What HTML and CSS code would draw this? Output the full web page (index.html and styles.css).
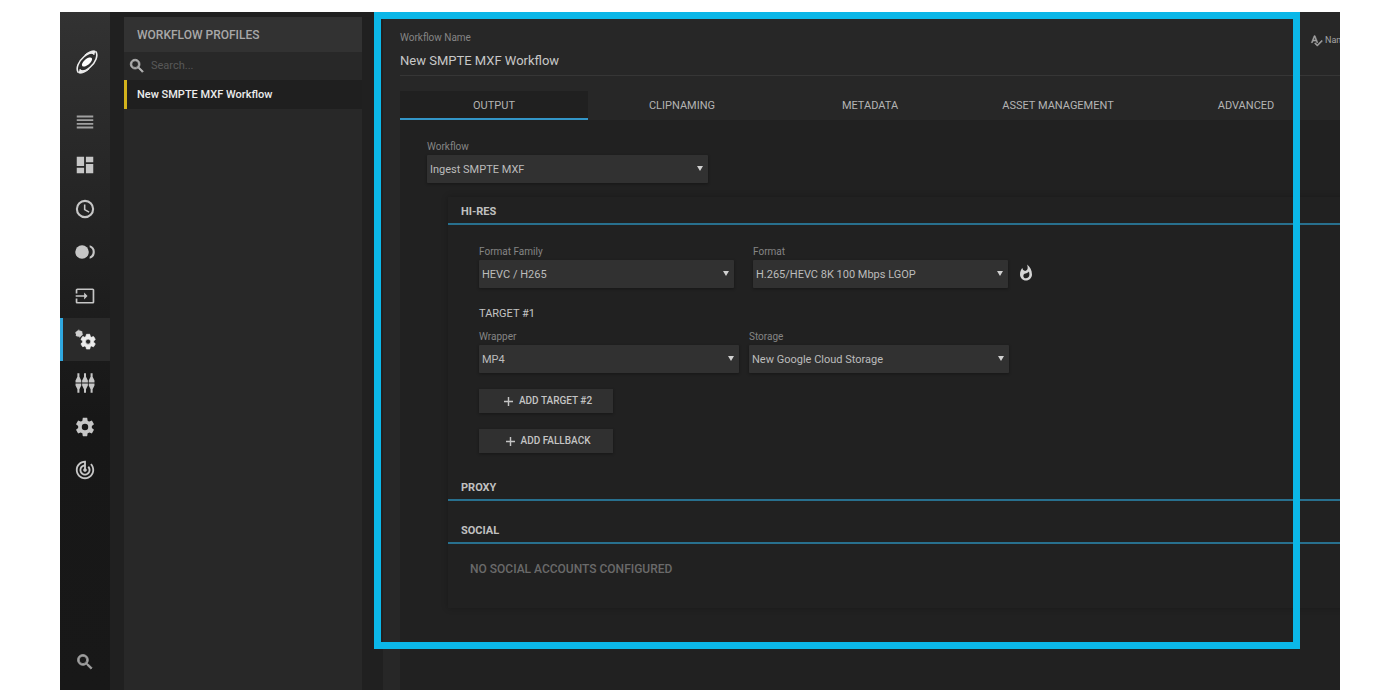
FILE: index.html
```html
<!DOCTYPE html>
<html lang="en">
<head>
<meta charset="utf-8">
<title>Workflow Profiles</title>
<link rel="stylesheet" href="styles.css">
</head>
<body>
<div class="app">
  <nav class="rail" aria-label="Main">
    <a class="logo" href="#" aria-label="Home">
      <svg viewBox="0 0 24 24"><g transform="rotate(-40 12 12)" fill="none" stroke="#ededed"><path d="M-1.500 14.500C-1 9.500 6 6 13 6c6 0 9.500 2 9.500 5" stroke-width="1.600"/><path d="M25.500 9.500C25 14.500 18 18 11 18c-6 0-9.500-2-9.500-5" stroke-width="1.600"/><path d="M-1.500 14.500c.5 2.500 5.500 4.500 11 4.200-3-.4-8-1.600-8-5.200M25.500 9.500c-.5-2.500-5.500-4.500-11-4.200 3 .4 8 1.600 8 5.200" fill="#ededed" stroke-width=".8"/><ellipse cx="12" cy="12" rx="6.200" ry="2.900" fill="#fff" stroke="none"/></g></svg>
    </a>
    <div class="rail-items">
      <button class="rail-item dim" aria-label="Menu"><svg viewBox="0 0 24 24"><path d="M3 15h18v-2H3v2zm0 4h18v-2H3v2zm0-8h18V9H3v2zm0-6v2h18V5H3z"/></svg></button>
      <button class="rail-item" aria-label="Dashboard"><svg viewBox="0 0 24 24"><path d="M3 13h8V3H3v10zm0 8h8v-6H3v6zm10 0h8V11h-8v10zm0-18v6h8V3h-8z"/></svg></button>
      <button class="rail-item" aria-label="Schedule"><svg viewBox="0 0 24 24"><path d="M12 2a10 10 0 1 0 0 20 10 10 0 0 0 0-20zm0 17.700a7.700 7.700 0 1 1 0-15.400 7.700 7.700 0 0 1 0 15.400zm.5-12.700H10.800v6l5.200 3.200.9-1.400-4.400-2.600z"/></svg></button>
      <button class="rail-item" aria-label="Record"><svg viewBox="-1 -1 26 26"><circle cx="8.500" cy="12" r="8"/><path d="M17.500 4v2.500a6 6 0 0 1 0 11V20a8.300 8.300 0 0 0 0-16z"/></svg></button>
      <button class="rail-item" aria-label="Inputs"><svg viewBox="-1 -1 26 26"><path d="M21 3H3c-1.100 0-2 .9-2 2v4h2V5h18v14H3v-4H1v4c0 1.100.9 2 2 2h18c1.100 0 2-.9 2-2V5c0-1.100-.9-2-2-2zM11 16l4-4-4-4v3H1v2h10v3z"/></svg></button>
      <button class="rail-item active" aria-label="Workflow profiles"><svg viewBox="0 0 24 24"><circle cx="5.500" cy="5" r="3.500" opacity=".85"/><circle cx="5.500" cy="5" r="3.700" fill="none" stroke="#ddd" stroke-width="1" stroke-dasharray="1.900 1.970"/><g transform="translate(5.800 4.200) scale(.8)"><path class="bold" d="M19.430 12.980c.04-.32.07-.64.07-.98s-.03-.66-.07-.98l2.110-1.650c.19-.15.24-.42.12-.64l-2-3.460c-.12-.22-.39-.3-.61-.22l-2.490 1c-.52-.4-1.080-.73-1.690-.98l-.38-2.650C14.460 2.180 14.250 2 14 2h-4c-.25 0-.46.18-.49.42l-.38 2.650c-.61.25-1.170.59-1.690.98l-2.490-1c-.23-.09-.49 0-.61.22l-2 3.460c-.13.22-.07.49.12.64l2.110 1.650c-.04.32-.07.65-.07.98s.03.66.07.98l-2.110 1.650c-.19.15-.24.42-.12.64l2 3.460c.12.22.39.3.61.22l2.490-1c.52.4 1.080.73 1.690.98l.38 2.650c.03.24.24.42.49.42h4c.25 0 .46-.18.49-.42l.38-2.650c.61-.25 1.170-.59 1.690-.98l2.490 1c.23.09.49 0 .61-.22l2-3.460c.12-.22.07-.49-.12-.64l-2.110-1.650zM12 15.500a3.500 3.500 0 1 1 0-7 3.500 3.500 0 0 1 0 7z"/></g></svg></button>
      <button class="rail-item" aria-label="Mixer"><svg viewBox="-1 -1 26 26"><path d="M3 .5h2.400v4L7.600 9v2.300H.8V9L3 4.500zM10.800.5h2.400v4L15.400 9v2.300H8.600V9l2.200-4.500zM18.600.5H21v4L23.200 9v2.300h-6.800V9l2.200-4.500zM.8 12.700h6.800V15l-2.200 4.500v4H3v-4L.8 15zM8.600 12.700h6.800V15l-2.200 4.500v4h-2.400v-4L8.600 15zM16.400 12.700h6.800V15L21 19.500v4h-2.400v-4L16.400 15z"/></svg></button>
      <button class="rail-item" aria-label="Settings"><svg viewBox="0 0 24 24"><path d="M19.430 12.980c.04-.32.07-.64.07-.98s-.03-.66-.07-.98l2.110-1.650c.19-.15.24-.42.12-.64l-2-3.460c-.12-.22-.39-.3-.61-.22l-2.490 1c-.52-.4-1.080-.73-1.690-.98l-.38-2.650C14.460 2.180 14.250 2 14 2h-4c-.25 0-.46.18-.49.42l-.38 2.650c-.61.25-1.170.59-1.690.98l-2.490-1c-.23-.09-.49 0-.61.22l-2 3.460c-.13.22-.07.49.12.64l2.110 1.650c-.04.32-.07.65-.07.98s.03.66.07.98l-2.110 1.650c-.19.15-.24.42-.12.64l2 3.460c.12.22.39.3.61.22l2.490-1c.52.4 1.080.73 1.690.98l.38 2.650c.03.24.24.42.49.42h4c.25 0 .46-.18.49-.42l.38-2.650c.61-.25 1.170-.59 1.690-.98l2.490 1c.23.09.49 0 .61-.22l2-3.460c.12-.22.07-.49-.12-.64l-2.110-1.650zM12 15.500a3.500 3.500 0 1 1 0-7 3.500 3.500 0 0 1 0 7z"/></svg></button>
      <button class="rail-item" aria-label="Monitoring"><svg viewBox="0 0 24 24"><path d="M19.070 4.930l-1.410 1.410C19.100 7.790 20 9.790 20 12c0 4.420-3.580 8-8 8s-8-3.580-8-8c0-4.080 3.050-7.440 7-7.930v2.020C8.160 6.570 6 9.030 6 12c0 3.310 2.690 6 6 6s6-2.690 6-6c0-1.660-.67-3.160-1.760-4.240l-1.410 1.410C15.550 9.900 16 10.900 16 12c0 2.210-1.790 4-4 4s-4-1.790-4-4c0-1.860 1.280-3.410 3-3.860v2.140c-.6.35-1 .98-1 1.720 0 1.100.9 2 2 2s2-.9 2-2c0-.74-.4-1.380-1-1.720V2h-1C6.480 2 2 6.480 2 12s4.480 10 10 10 10-4.480 10-10c0-2.760-1.120-5.260-2.930-7.070z"/></svg></button>
    </div>
    <button class="rail-item rail-search dim" aria-label="Search"><svg class="bold" viewBox="0 0 24 24"><path d="M15.500 14h-.79l-.28-.27A6.470 6.470 0 0 0 16 9.500 6.500 6.500 0 1 0 9.500 16c1.610 0 3.090-.59 4.230-1.570l.27.28v.79l5 4.990L20.490 19l-4.990-5zm-6 0a4.500 4.500 0 1 1 0-9 4.500 4.500 0 0 1 0 9z"/></svg></button>
  </nav>

  <aside class="profiles">
    <h1 class="profiles-title">WORKFLOW PROFILES</h1>
    <label class="search">
      <svg class="bold" viewBox="0 0 24 24" aria-hidden="true"><path d="M15.500 14h-.79l-.28-.27A6.470 6.470 0 0 0 16 9.500 6.500 6.500 0 1 0 9.500 16c1.610 0 3.090-.59 4.230-1.570l.27.28v.79l5 4.990L20.490 19l-4.990-5zm-6 0a4.500 4.500 0 1 1 0-9 4.500 4.500 0 0 1 0 9z"/></svg>
      <input type="search" placeholder="Search..." aria-label="Search profiles">
    </label>
    <a class="profile" href="#">New SMPTE MXF Workflow</a>
  </aside>

  <main class="editor">
    <header class="editor-head">
      <div class="name-row">
        <div class="name-field">
          <label class="label" for="wf-name">Workflow Name</label>
          <input class="name-input" id="wf-name" type="text" value="New SMPTE MXF Workflow">
        </div>
        <button class="naming"><svg class="bold" viewBox="0 0 24 24" aria-hidden="true"><path d="M12.450 16h2.090L9.430 3H7.570L2.460 16h2.090l1.120-3h5.640l1.140 3zm-6.020-5L8.500 5.480 10.570 11H6.430zm15.160.59l-8.090 8.090L9.830 16l-1.410 1.410 5.090 5.090L23 13l-1.410-1.410z"/></svg>Name</button>
      </div>
      <div class="tabs" role="tablist">
        <button class="tab selected" role="tab" aria-selected="true">OUTPUT</button>
        <button class="tab" role="tab">CLIPNAMING</button>
        <button class="tab" role="tab">METADATA</button>
        <button class="tab" role="tab">ASSET MANAGEMENT</button>
        <button class="tab" role="tab">ADVANCED</button>
      </div>
    </header>

    <div class="editor-body">
      <div class="field workflow-field">
        <label class="label" for="workflow">Workflow</label>
        <div class="select"><select id="workflow"><option>Ingest SMPTE MXF</option></select></div>
      </div>

      <div class="card">
        <section>
          <h2 class="section-title">HI-RES</h2>
          <div class="hires">
            <div class="fields format-row">
              <div class="field">
                <label class="label" for="family">Format Family</label>
                <div class="select"><select id="family"><option>HEVC / H265</option></select></div>
              </div>
              <div class="field">
                <label class="label" for="format">Format</label>
                <div class="select"><select id="format"><option>H.265/HEVC 8K 100 Mbps LGOP</option></select></div>
              </div>
              <svg class="hot" viewBox="0 0 24 24" aria-hidden="true"><path d="M13.500.67s.74 2.650.74 4.800c0 2.060-1.350 3.730-3.410 3.730-2.070 0-3.630-1.670-3.630-3.730l.03-.36C5.210 7.510 4 10.620 4 14c0 4.420 3.580 8 8 8s8-3.580 8-8C20 8.610 17.410 3.800 13.500.67zM11.710 19c-1.780 0-3.220-1.400-3.220-3.140 0-1.620 1.050-2.760 2.810-3.120 1.770-.36 3.600-1.210 4.620-2.580.39 1.290.59 2.650.59 4.040 0 2.650-2.150 4.800-4.800 4.800z"/></svg>
            </div>
            <h3 class="target-title">TARGET #1</h3>
            <div class="fields target-row">
              <div class="field">
                <label class="label" for="wrapper">Wrapper</label>
                <div class="select"><select id="wrapper"><option>MP4</option></select></div>
              </div>
              <div class="field">
                <label class="label" for="storage">Storage</label>
                <div class="select"><select id="storage"><option>New Google Cloud Storage</option></select></div>
              </div>
            </div>
            <div class="actions">
              <button class="add"><svg viewBox="0 0 10 10" aria-hidden="true"><path d="M4.200 0h1.600v4.200H10v1.600H5.800V10H4.200V5.800H0V4.200h4.200z"/></svg>ADD TARGET #2</button>
              <button class="add"><svg viewBox="0 0 10 10" aria-hidden="true"><path d="M4.200 0h1.600v4.200H10v1.600H5.800V10H4.200V5.800H0V4.200h4.200z"/></svg>ADD FALLBACK</button>
            </div>
          </div>
        </section>
        <section><h2 class="section-title">PROXY</h2></section>
        <section>
          <h2 class="section-title">SOCIAL</h2>
          <p class="empty">NO SOCIAL ACCOUNTS CONFIGURED</p>
        </section>
      </div>
    </div>
  </main>
  <div class="highlight"></div>
</div>
</body>
</html>
```
FILE: styles.css
```css
* { box-sizing: border-box; }

body {
  margin: 0;
  min-height: 100vh;
  padding: 12px 60px 10px;
  display: flex;
  background: #fff;
  font-family: Roboto, "Liberation Sans", sans-serif;
  font-size: 11px;
  line-height: 16px;
  color: #c4c4c4;
}

button, input, select { font: inherit; color: inherit; border: 0; background: none; padding: 0; margin: 0; }
h1, h2, h3, p { margin: 0; font-weight: 400; }
a { color: inherit; text-decoration: none; }
svg { display: block; fill: currentColor; }
.bold { stroke: currentColor; stroke-width: 1; overflow: visible; }

.app {
  position: relative;
  flex: 1;
  min-width: 0;
  display: grid;
  grid-template-columns: 50px 238px minmax(0, 1fr);
  background: #202020;
  overflow: hidden;
}

/* icon rail */
.rail {
  display: flex;
  flex-direction: column;
  align-items: stretch;
  background: linear-gradient(#323232, #1e1e1e 42%, #171717 60%, #181818);
}
.logo { display: flex; justify-content: center; height: 88px; padding-top: 38px; padding-left: 4px; }
.logo svg { width: 24px; height: 24px; overflow: visible; }
.rail-items { display: grid; grid-auto-rows: 1fr; height: 392px; }
.rail-item { display: flex; align-items: center; justify-content: center; color: #c6c6c6; min-height: 40px; }
.rail-item svg { width: 22px; height: 22px; }
.dim { color: #a0a0a0; }
.active { background: #2a2a2a; border-left: 3px solid #2fa8e0; padding-right: 3px; color: #ececec; }
.rail-search { margin-top: auto; margin-bottom: 8px; }
.rail-search svg { width: 20px; height: 20px; }

/* profile list */
.profiles { margin-left: 14px; margin-right: -14px; padding-top: 5px; background: linear-gradient(#202020 5px, #282828 5px); }
.profiles-title { padding: 10px 13px 9px; background: #323232; color: #a8a8a8; font-size: 12px; font-weight: 500; }
.search { display: flex; align-items: center; gap: 5px; height: 28px; padding-left: 4px; }
.search svg { width: 18px; height: 18px; color: #b4b4b4; }
.search input { flex: 1; min-width: 0; outline: 0; }
.search input::placeholder { color: #585858; }
.profile { display: block; padding: 7px 10px 6px; border-left: 3px solid #d2b21c; background: #1f1f1f; color: #ececec; font-weight: 500; }

/* editor */
.editor { margin-left: 35px; margin-right: -26px; display: flex; flex-direction: column; background: #272727; padding-left: 17px; }
.editor-head { padding-top: 18px; }
.name-row { display: flex; border-bottom: 1px solid #363636; padding-bottom: 3px; }
.name-field { flex: 1; }
.label { display: block; color: #858585; font-size: 10px; line-height: 16px; }
.name-input { display: block; width: 100%; height: 24px; margin-top: 2px; font-size: 13px; color: #c8c8c8; }
.naming { display: flex; align-items: center; gap: 2px; width: 56px; height: 20px; font-size: 9px; color: #a4a4a4; }
.naming svg { width: 13px; height: 13px; }
.tabs { display: grid; grid-template-columns: repeat(5, minmax(0, 1fr)); margin-top: 15px; margin-right: 26px; }
.tab { height: 29px; padding-top: 2px; color: #b4b4b4; border-bottom: 2px solid transparent; }
.selected { background: #202020; border-bottom-color: #3396c8; }

.editor-body { flex: 1; padding: 19px 0 80px 27px; background: #212121; }
.select { position: relative; box-shadow: 0 1px 3px #0005; }
.select select { display: block; width: 100%; height: 28px; padding: 1px 24px 0 3px; appearance: none; background: #313131; border-radius: 1px; color: #bcbcbc; }
.select::after { content: ""; position: absolute; right: 5px; top: 11px; border: 3px solid transparent; border-top: 5px solid #d0d0d0; border-bottom: 0; pointer-events: none; }
.workflow-field { width: 281px; }

.card { margin: 14px 0 0 21px; padding-bottom: 14px; box-shadow: 0 0 6px #0004; }
.section-title { padding: 7px 13px 3px; border-bottom: 2px solid #28708e; font-size: 11px; font-weight: 700; color: #c0c0c0; }
section + section .section-title { padding-top: 22px; }
.hires { padding: 19px 0 5px 31px; }
.fields { display: grid; align-items: end; }
.format-row { grid-template-columns: 255px 255px 18px; column-gap: 19px; }
.target-row { grid-template-columns: 260px 260px; column-gap: 10px; }
.hot { width: 18px; height: 18px; margin: 0 0 6px -10px; color: #d4d4d4; }
.target-title { margin: 18px 0 7px; font-size: 11px; line-height: 16px; }
.actions { display: flex; flex-direction: column; align-items: flex-start; gap: 16px; margin-top: 16px; }
.add { display: flex; align-items: center; justify-content: center; gap: 6px; width: 134px; height: 24px; padding-left: 4px; background: #303030; box-shadow: 0 1px 3px #0005; font-size: 10px; font-weight: 500; }
.add svg { width: 9px; height: 9px; }
.empty { padding: 17px 22px; color: #6a6a6a; font-size: 12px; font-weight: 500; }

/* callout frame around the editor */
.highlight { position: absolute; inset: 0 40px 41px 314px; border: 7px solid #0bb7e8; pointer-events: none; }
```
